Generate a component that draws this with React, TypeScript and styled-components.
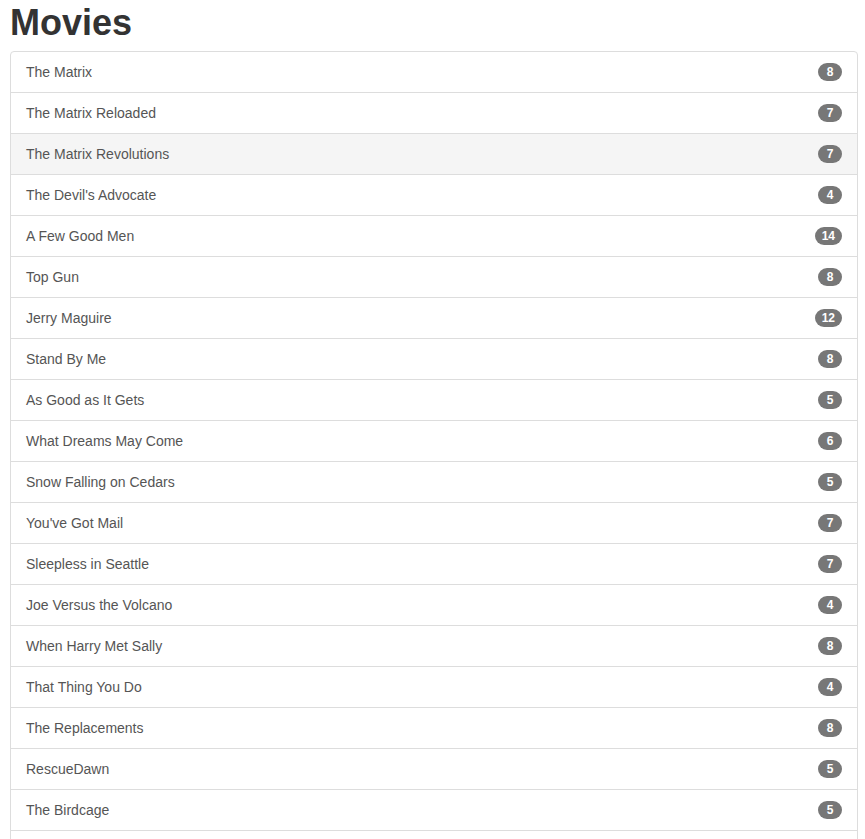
import styled, { createGlobalStyle } from 'styled-components';

const movies: [string, number][] = [
  ['The Matrix', 8],
  ['The Matrix Reloaded', 7],
  ['The Matrix Revolutions', 7],
  ["The Devil's Advocate", 4],
  ['A Few Good Men', 14],
  ['Top Gun', 8],
  ['Jerry Maguire', 12],
  ['Stand By Me', 8],
  ['As Good as It Gets', 5],
  ['What Dreams May Come', 6],
  ['Snow Falling on Cedars', 5],
  ["You've Got Mail", 7],
  ['Sleepless in Seattle', 7],
  ['Joe Versus the Volcano', 4],
  ['When Harry Met Sally', 8],
  ['That Thing You Do', 4],
  ['The Replacements', 8],
  ['RescueDawn', 5],
  ['The Birdcage', 5],
  ['Unforgiven', 5],
  ['Johnny Mnemonic', 4],
];

const GlobalStyle = createGlobalStyle`
  body {
    margin: 0;
    font-family: "Liberation Sans", Arial, sans-serif;
    font-size: 14px;
    line-height: 1.42857;
    color: #333;
    background: #fff;
  }
`;

const Page = styled.div`
  padding: 3px 7px 20px 10px;
`;

const Title = styled.h1`
  margin: 0 0 8px;
  font-size: 36px;
  font-weight: 700;
  line-height: 1.1;
  color: #333;
`;

const List = styled.div`
  display: flex;
  flex-direction: column;
`;

const Item = styled.a<{ $hover?: boolean }>`
  display: flex;
  align-items: center;
  justify-content: space-between;
  padding: 10px 15px;
  margin-bottom: -1px;
  border: 1px solid #ddd;
  background: ${({ $hover }) => ($hover ? '#f5f5f5' : '#fff')};
  color: #555;
  text-decoration: none;
  line-height: 20px;
  cursor: pointer;

  &:first-child {
    border-top-left-radius: 4px;
    border-top-right-radius: 4px;
  }

  &:hover {
    background: #f5f5f5;
  }
`;

const Badge = styled.span`
  display: inline-block;
  min-width: 10px;
  padding: 3px 7px;
  font-size: 12px;
  font-weight: 700;
  line-height: 1;
  color: #fff;
  text-align: center;
  background: #777;
  border-radius: 10px;
`;

const App = () => (
  <Page>
    <GlobalStyle />
    <Title>Movies</Title>
    <List>
      {movies.map(([name, count], i) => (
        <Item key={name} $hover={i === 2}>
          {name}
          <Badge>{count}</Badge>
        </Item>
      ))}
    </List>
  </Page>
);

export default App;
